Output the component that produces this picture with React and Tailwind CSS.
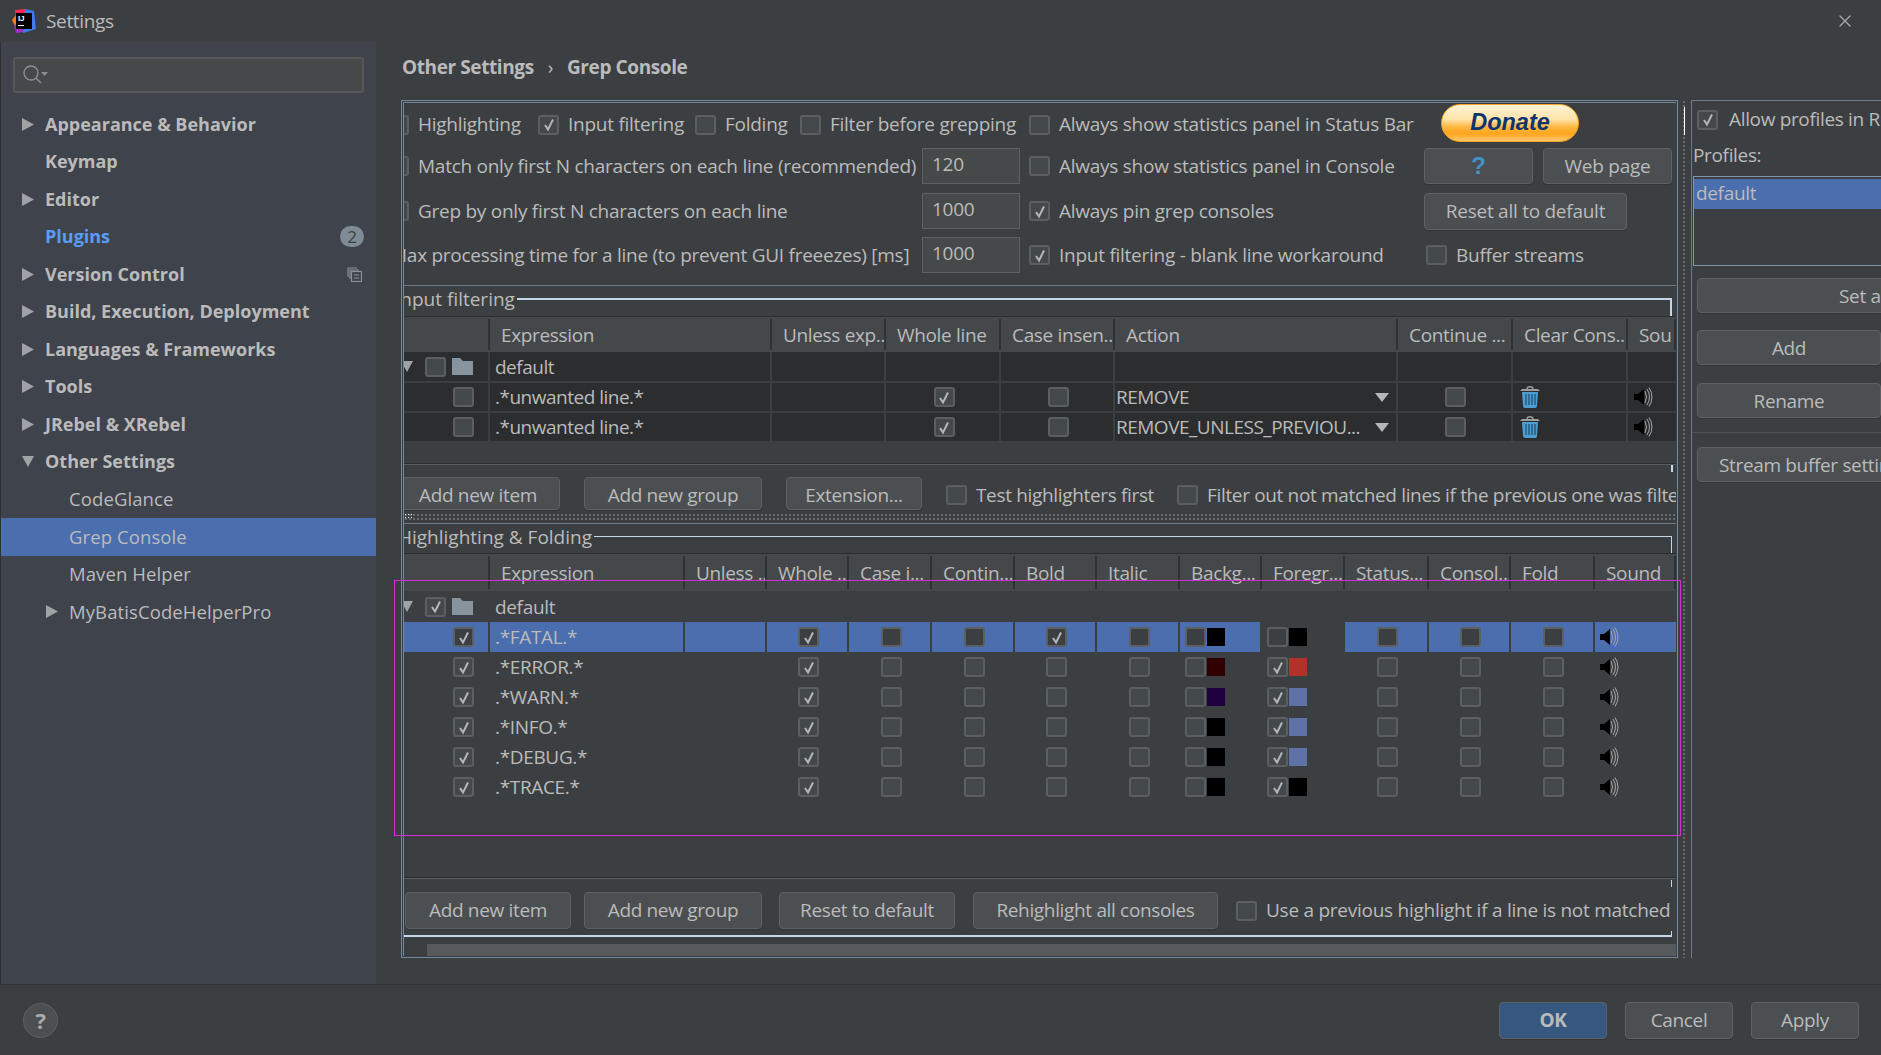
import { X } from 'lucide-react'

const menu = [
  { label: 'Appearance & Behavior', arrow: 'right' },
  { label: 'Keymap' },
  { label: 'Editor', arrow: 'right' },
  { label: 'Plugins', blue: true, badge: true },
  { label: 'Version Control', arrow: 'right', copy: true },
  { label: 'Build, Execution, Deployment', arrow: 'right' },
  { label: 'Languages & Frameworks', arrow: 'right' },
  { label: 'Tools', arrow: 'right' },
  { label: 'JRebel & XRebel', arrow: 'right' },
  { label: 'Other Settings', arrow: 'down' },
  { label: 'CodeGlance', sub: true },
  { label: 'Grep Console', sub: true, selected: true },
  { label: 'Maven Helper', sub: true },
  { label: 'MyBatisCodeHelperPro', sub: true, arrow: 'right' },
]

const filterHead = ['', 'Expression', 'Unless exp...', 'Whole line', 'Case insen...', 'Action', 'Continue ...', 'Clear Cons...', 'Sou']
const filterRows = [
  { action: 'REMOVE' },
  { action: 'REMOVE_UNLESS_PREVIOU...' },
]

const highlightHead = ['', 'Expression', 'Unless ...', 'Whole ...', 'Case i...', 'Contin...', 'Bold', 'Italic', 'Backg...', 'Foregr...', 'Status...', 'Consol...', 'Fold', 'Sound']
const highlightRows = [
  { expr: '.*FATAL.*', bold: true, bg: 'bg-[#000000]', fg: 'bg-[#000000]', selected: true },
  { expr: '.*ERROR.*', fgOn: true, bg: 'bg-[#300000]', fg: 'bg-[#b03228]' },
  { expr: '.*WARN.*', fgOn: true, bg: 'bg-[#1f0040]', fg: 'bg-[#5f72a8]' },
  { expr: '.*INFO.*', fgOn: true, bg: 'bg-[#000000]', fg: 'bg-[#5f72a8]' },
  { expr: '.*DEBUG.*', fgOn: true, bg: 'bg-[#000000]', fg: 'bg-[#5f72a8]' },
  { expr: '.*TRACE.*', fgOn: true, bg: 'bg-[#000000]', fg: 'bg-[#000000]' },
]

const filterCols = 'grid-cols-[86px_282px_114px_115px_114px_283px_115px_115px_48px]'
const highlightCols = 'grid-cols-[86px_195px_82px_82px_83px_83px_82px_83px_82px_83px_84px_82px_84px_81px]'

const Logo = () => (
  <svg width="24" height="24" viewBox="0 0 24 24">
    <polygon points="3,1 13,0 16,6 4,12" fill="#fe2857" />
    <polygon points="0,11 5,5 9,16 3,17" fill="#fe7a16" />
    <polygon points="2,16 9,14 12,23 4,24" fill="#a22fc4" />
    <polygon points="13,0 22,2 24,20 11,24" fill="#3d7cf0" />
    <rect x="4" y="4" width="16" height="16" fill="#000" />
    <text x="6" y="12" fontSize="8" fontWeight="700" fill="#fff" fontFamily="Liberation Sans, sans-serif">IJ</text>
    <rect x="6" y="16" width="6" height="1" fill="#fff" />
  </svg>
)

const Tri = ({ dir = 'right', className = '' }) => (
  <svg width="12" height="13" viewBox="0 0 12 13" className={className}>
    {dir === 'right' ? <polygon points="0,0 12,6.5 0,13" fill="#a0a3a5" /> : <polygon points="0,1 12,1 6,12" fill="#a0a3a5" />}
  </svg>
)

const CheckMark = () => (
  <svg width="14" height="15" viewBox="0 0 14 15" fill="none">
    <path d="M3 8 L6 12.5 L11 2.5" stroke="#b4b6b8" strokeWidth="2" />
  </svg>
)

// darcula checkbox, sits 21x20 in every row
const Box = ({ on, dark, className = '' }) => (
  <span className={`flex h-[20px] w-[21px] shrink-0 items-center justify-center rounded-[3px] border-2 border-[#5c5f61] ${dark ? 'bg-[#3c3f41]' : 'bg-[#43484a]'} ${className}`}>
    {on && <CheckMark />}
  </span>
)

const Check = ({ on, label, className = '' }) => (
  <div className={`flex shrink-0 items-center gap-[9px] whitespace-nowrap ${className}`}>
    <Box on={on} />
    <span>{label}</span>
  </div>
)

const Btn = ({ children, className = '' }) => (
  <div className={`flex shrink-0 items-center justify-center whitespace-nowrap rounded-[4px] border border-[#5e6163] bg-[#4b4f51] shadow-[0_1px_0_#333638] ${className}`}>
    {children}
  </div>
)

const Field = ({ value }) => (
  <div className="flex h-[36px] w-[98px] shrink-0 items-center border border-[#5e6163] bg-[#45494a] pb-[3px] pl-[9px]">{value}</div>
)

const Folder = () => (
  <svg width="21" height="17" viewBox="0 0 21 17" className="shrink-0">
    <path d="M0 0 H8 L11 3 H21 V17 H0 Z" fill="#87939d" />
  </svg>
)

const Trash = () => (
  <svg width="20" height="22" viewBox="0 0 20 22">
    <path d="M7 3 C7 0 13 0 13 3" stroke="#9a9a9a" strokeWidth="1.5" fill="none" />
    <path d="M0 5 L2 3 H18 L20 5 Z" fill="#9a9c9e" />
    <path d="M2 6 H18 L17 20 Q17 22 15 22 H5 Q3 22 3 20 Z" fill="#4c9fd3" />
    <path d="M6 8 V19 M9 8 V19 M12 8 V19 M15 8 V19" stroke="#23577a" strokeWidth="1.4" />
  </svg>
)

const Speaker = () => (
  <svg width="20" height="20" viewBox="0 0 20 20" fill="none">
    <path d="M0 7 H4 L10 2 V18 L4 13 H0 Z" fill="#000" />
    <path d="M11 4 Q14 10 11 16 M13 2 Q18 10 13 18 M15 0.5 Q21 10 15 19.5" stroke="#a4a6a8" strokeWidth="1" />
  </svg>
)

const Donate = () => (
  <div className="flex h-[38px] w-[138px] items-center justify-center rounded-full border border-[#f5a623] bg-[linear-gradient(#fff3d6_0%,#ffe3a8_40%,#ffb53c_62%,#ffa51f_80%,#ffc870_100%)] font-['Liberation_Sans',sans-serif] text-[23.5px] font-bold italic tracking-normal text-[#0b3470]">
    Donate
  </div>
)

const Title = ({ text, indent, thin }) => (
  <div className={`flex items-start overflow-hidden whitespace-nowrap ${thin ? 'h-[29px]' : 'h-[30px]'}`}>
    <span className={`shrink-0 pr-[2px] leading-[26px] tracking-normal ${indent}`}>{text}</span>
    <div className={`mr-[4px] flex-1 border-[#c3d6e8] ${thin ? 'mt-[12px] h-[17px] border-r border-t' : 'mt-[12px] h-[18px] border-r-2 border-t-2'}`} />
  </div>
)

const Head = ({ cols, labels, height }) => (
  <div className={`grid border-t border-[#2b2d2f] bg-[#44484b] ${cols} ${height}`}>
    {labels.map((label, i) => (
      <div key={i} className={`my-[2px] flex items-center overflow-hidden whitespace-nowrap border-r-2 border-[#2f3234] pt-[2px] ${i === 0 ? '' : 'pl-[11px]'}`}>
        {label}
      </div>
    ))}
  </div>
)

const Sidebar = () => (
  <aside className="flex w-[376px] shrink-0 flex-col border-l border-[#2f3133] bg-[#3f434c]">
    <div className="mx-[12px] mt-[15px] flex h-[36px] items-center rounded-[3px] border-2 border-[#555859] bg-[#45494a] pl-[8px]">
      <svg width="26" height="20" viewBox="0 0 26 20" fill="none">
        <circle cx="8" cy="8" r="7" stroke="#8c8e90" strokeWidth="1.4" />
        <path d="M13 13 L18 18" stroke="#8c8e90" strokeWidth="1.6" />
        <polygon points="18,7 25,7 21.5,11" fill="#8c8e90" />
      </svg>
    </div>
    <div className="mt-[12.5px]">
      {menu.map(item => (
        <div key={item.label} className={`flex h-[37.5px] items-center ${item.selected ? 'bg-[#4b6eaf]' : ''} ${item.sub ? 'pl-[45px] font-normal' : 'pl-[21px] font-bold'}`}>
          <span className="flex w-[23px] shrink-0">{item.arrow && <Tri dir={item.arrow} />}</span>
          <span className={`flex-1 whitespace-nowrap ${item.blue ? 'text-[#589df6]' : ''} ${item.sub ? 'text-[18.5px] tracking-[0.1px]' : 'text-[18px] tracking-normal'}`}>{item.label}</span>
          {item.badge && <span className="mr-[12px] flex h-[21px] w-[24px] items-center justify-center rounded-full bg-[#7f8b96] text-[17px] font-normal text-[#3c3f41]">2</span>}
          {item.copy && (
            <svg width="15" height="15" viewBox="0 0 15 15" fill="none" stroke="#8d9195" strokeWidth="1.2" className="mr-[14px]">
              <path d="M1 10 V1 H10" />
              <path d="M3 12 V3 H12 V3" />
              <rect x="4.5" y="4.5" width="10" height="10" />
              <path d="M7 8 H12 M7 11 H12" />
            </svg>
          )}
        </div>
      ))}
    </div>
  </aside>
)

const GeneralOptions = () => (
  <div className="grid h-[182px] grid-cols-[625px_395px_1fr] grid-rows-[43px_40px_50px_38px] overflow-hidden tracking-[-0.26px]">
    <div className="flex items-center">
      <Check label="Highlighting" className="-ml-[16px] w-[150px]" />
      <Check on label="Input filtering" className="w-[157px]" />
      <Check label="Folding" className="w-[105px]" />
      <Check label="Filter before grepping" />
    </div>
    <Check label="Always show statistics panel in Status Bar" />
    <div className="ml-[17px] flex items-start pt-[1px]"><Donate /></div>

    <div className="flex items-center">
      <Check label="Match only first N characters on each line (recommended)" className="-ml-[16px] w-[534px]" />
      <Field value="120" />
    </div>
    <Check label="Always show statistics panel in Console" />
    <div className="flex items-center gap-[10px]">
      <Btn className="h-[36px] w-[109px] font-['Liberation_Sans',sans-serif] text-[24px] font-bold text-[#3f93c6]">?</Btn>
      <Btn className="h-[36px] w-[129px]">Web page</Btn>
    </div>

    <div className="flex items-center">
      <Check label="Grep by only first N characters on each line" className="-ml-[16px] w-[534px]" />
      <Field value="1000" />
    </div>
    <Check on label="Always pin grep consoles" />
    <div className="flex items-center">
      <Btn className="h-[37px] w-[203px]">Reset all to default</Btn>
    </div>

    <div className="flex items-center">
      <span className="-ml-[14px] w-[532px] shrink-0 whitespace-nowrap">Max processing time for a line (to prevent GUI freeezes) [ms]</span>
      <Field value="1000" />
    </div>
    <Check on label="Input filtering - blank line workaround" />
    <Check label="Buffer streams" className="pl-[2px]" />
  </div>
)

const FilterRow = ({ cols, first, folder, action }) => (
  <div className={`grid border-b-2 border-[#3c3f41] bg-[#2b2d2f] ${cols} ${folder ? 'h-[31px]' : 'h-[30px]'}`}>
    {first}
    <div className={`flex items-center overflow-hidden whitespace-nowrap border-r-2 border-[#3c3f41] pl-[5px] tracking-[-0.5px] ${folder ? 'pt-[2px]' : ''}`}>{folder ? 'default' : '.*unwanted line.*'}</div>
    <div className="border-r-2 border-[#3c3f41]" />
    <div className="flex items-center justify-center border-r-2 border-[#3c3f41] pl-[3px]">{!folder && <Box on />}</div>
    <div className="flex items-center justify-center border-r-2 border-[#3c3f41] pl-[2px]">{!folder && <Box />}</div>
    <div className="flex items-center justify-between border-r-2 border-[#3c3f41] pl-[1px] pr-[7px] whitespace-nowrap tracking-[-0.5px]">
      {action}
      {action && <svg width="14" height="9" viewBox="0 0 14 9"><polygon points="0,0 14,0 7,9" fill="#b4b6b8" /></svg>}
    </div>
    <div className="flex items-center justify-center border-r-2 border-[#3c3f41] pl-[2px]">{!folder && <Box />}</div>
    <div className="flex items-center border-r-2 border-[#3c3f41] pl-[7px]">{!folder && <Trash />}</div>
    <div className="flex items-center pl-[6px]">{!folder && <Speaker />}</div>
  </div>
)

const GroupCell = ({ on, bordered }) => (
  <div className={`flex items-center overflow-hidden ${bordered ? 'border-r-2 border-[#3c3f41]' : ''}`}>
    <Tri dir="down" className="-ml-[3px] mr-[12px] shrink-0" />
    <Box on={on} className="mr-[6px]" />
    <Folder />
  </div>
)

const ItemCell = ({ on, blue = '' }) => (
  <div className={`flex items-center justify-end border-r-2 border-[#3c3f41] pr-[14px] ${blue}`}>
    <Box on={on} dark={!!blue} />
  </div>
)

const FilterTable = () => (
  <div>
    <Head cols={filterCols} labels={filterHead} height="h-[36px]" />
    <FilterRow cols={filterCols} folder first={<GroupCell bordered />} />
    {filterRows.map(r => (
      <FilterRow key={r.action} cols={filterCols} action={r.action} first={<ItemCell />} />
    ))}
  </div>
)

const HighlightRow = ({ row }) => {
  const blue = row.selected ? 'bg-[#4b6eaf]' : ''
  const cell = `flex items-center border-r-2 border-[#3c3f41] ${blue}`
  const center = `${cell} justify-center pl-[3px]`
  return (
    <div className={`grid h-[30px] ${highlightCols}`}>
      <ItemCell on blue={blue} />
      <div className={`${cell} overflow-hidden whitespace-nowrap pl-[5px]`}>{row.expr}</div>
      <div className={cell} />
      <div className={center}><Box on dark={row.selected} /></div>
      <div className={center}><Box dark={row.selected} /></div>
      <div className={center}><Box dark={row.selected} /></div>
      <div className={center}><Box on={row.bold} dark={row.selected} /></div>
      <div className={center}><Box dark={row.selected} /></div>
      <div className={`${cell} pl-[5px]`}><Box dark={row.selected} /><span className={`ml-[1px] h-[18px] w-[18px] ${row.bg}`} /></div>
      <div className="flex items-center pl-[5px]"><Box on={row.fgOn} dark={row.selected} /><span className={`ml-[1px] h-[18px] w-[18px] ${row.fg}`} /></div>
      <div className={center}><Box dark={row.selected} /></div>
      <div className={center}><Box dark={row.selected} /></div>
      <div className={center}><Box dark={row.selected} /></div>
      <div className={`flex items-center pl-[5px] ${blue}`}><Speaker /></div>
    </div>
  )
}

const HighlightTable = () => (
  <div>
    <Head cols={highlightCols} labels={highlightHead} height="h-[38px]" />
    <div className={`grid h-[31px] ${highlightCols}`}>
      <GroupCell on />
      <div className="flex items-center pl-[5px] pt-[1px]">default</div>
    </div>
    {highlightRows.map(r => <HighlightRow key={r.expr} row={r} />)}
  </div>
)

const Panel = () => (
  <div className="h-[858px] w-[1277px] shrink-0 border border-[#75879a] p-[1px]">
    <div className="flex h-full flex-col overflow-hidden border border-[#75879a] border-b-0 border-r-0">
      <GeneralOptions />
      <div className="h-px bg-[#6d7b88]" />
      <Title text="Input filtering" indent="-ml-[9px]" />
      <FilterTable />
      <div className="h-[20px] shrink-0" />
      <div className="h-[2px] border-t border-[#2b2d2f] bg-[#5a5e60]" />
      <div className="relative flex h-[48px] shrink-0 items-start gap-[24px] pt-[12px]">
        <span className="absolute right-[3px] top-0 h-[7px] w-[2px] bg-[#c3d6e8]" />
        <Btn className="-ml-[8px] h-[33px] w-[164px] pt-[3px]">Add new item</Btn>
        <Btn className="h-[33px] w-[178px] pt-[3px]">Add new group</Btn>
        <Btn className="h-[33px] w-[136px] pt-[3px]">Extension...</Btn>
        <Check label="Test highlighters first" className="h-[33px] w-[207px] pt-[3px]" />
        <Check label="Filter out not matched lines if the previous one was filtered" className="h-[33px] pt-[3px]" />
      </div>
      <div className="relative h-[7px] shrink-0 bg-[radial-gradient(#6a6d6f_1px,transparent_1px)] bg-[length:4px_4px]">
        <span className="absolute left-0 top-0 h-[5px] w-[10px] bg-[radial-gradient(#ffffff_1px,transparent_1px)] bg-[length:3px_3px]" />
      </div>
      <div className="mt-[3px] h-px shrink-0 bg-[#6d7b88]" />
      <Title text="Highlighting & Folding" indent="-ml-[6px]" thin />
      <HighlightTable />
      <div className="flex-1" />
      <div className="h-[2px] shrink-0 border-t border-[#2b2d2f] bg-[#5a5e60]" />
      <div className="relative mr-[4px] flex h-[58px] shrink-0 items-start border-b-2 border-[#c3d6e8] pt-[13px]">
        <span className="absolute right-0 top-[1px] h-[7px] w-px bg-[#c3d6e8]" />
        <span className="absolute bottom-0 right-0 h-[4px] w-px bg-[#c3d6e8]" />
        <Btn className="ml-[1px] h-[37px] w-[166px]">Add new item</Btn>
        <Btn className="ml-[13px] h-[37px] w-[178px]">Add new group</Btn>
        <Btn className="ml-[17px] h-[37px] w-[176px]">Reset to default</Btn>
        <Btn className="ml-[18px] h-[37px] w-[245px]">Rehighlight all consoles</Btn>
        <Check label="Use a previous highlight if a line is not matched" className="ml-[18px] h-[37px] tracking-[-0.26px]" />
      </div>
      <div className="h-[7px] shrink-0" />
      <div className="ml-[23px] h-[12px] shrink-0 bg-[#565a5b]" />
    </div>
  </div>
)

const Splitter = () => (
  <div className="relative flex h-[858px] w-[13px] shrink-0 justify-center px-[3px]">
    <div className="w-[5px] bg-[radial-gradient(#66696b_1px,transparent_1px)] bg-[length:4px_4px]" />
    <span className="absolute left-[6px] top-[7px] h-[28px] w-[1px] bg-[radial-gradient(#ffffff_1px,transparent_1px)] bg-[length:2px_3px]" />
  </div>
)

const Profiles = () => (
  <div className="flex h-[858px] w-[200px] shrink-0 flex-col overflow-hidden border-l border-t border-[#6d7b88]">
    <Check on label="Allow profiles in Run configuration" className="ml-[5px] mt-[7px] h-[23px] gap-[11px]" />
    <div className="ml-[1px] mt-[12px] h-[24px] leading-[24px]">Profiles:</div>
    <div className="ml-[1px] mt-[9px] h-[90px] w-[200px] border-y border-l border-[#7f97ad] pt-[2px]">
      <div className="h-[30px] bg-[#4b6eaf] pl-[2px] leading-[28px]">default</div>
    </div>
    <Btn className="ml-[5px] mt-[12px] h-[35px] w-[240px] justify-start pl-[141px] pt-[1px]">Set active profile</Btn>
    <Btn className="ml-[5px] mt-[17px] h-[35px] w-[184px] pt-[2px]">Add</Btn>
    <Btn className="ml-[5px] mt-[18px] h-[35px] w-[184px] pt-[2px]">Rename</Btn>
    <div className="mt-[14px] h-px bg-[#505355]" />
    <Btn className="ml-[5px] mt-[14px] h-[35px] w-[240px] justify-start pl-[21px] pt-[2px]">Stream buffer settings</Btn>
  </div>
)

const Footer = () => (
  <footer className="flex h-[71px] shrink-0 items-center border-t border-[#2f3133] pl-[23px] pr-[22px]">
    <span className="flex h-[35px] w-[35px] items-center justify-center rounded-full border border-[#5e6163] bg-[#4b4f51] text-[22px] font-bold text-[#a9abad]">?</span>
    <div className="flex-1" />
    <Btn className="h-[37px] w-[108px] border-[#4c708c] bg-[#365880] font-bold">OK</Btn>
    <Btn className="ml-[18px] h-[37px] w-[108px]">Cancel</Btn>
    <Btn className="ml-[18px] h-[37px] w-[108px]">Apply</Btn>
  </footer>
)

export default function App() {
  return (
    <div className="relative flex h-screen w-screen flex-col overflow-hidden bg-[#3c3f41] font-['Open_Sans',sans-serif] text-[19px] tracking-[-0.34px] text-[#bbbbbb]">
      <header className="flex h-[42px] shrink-0 items-center pl-[12px] pr-[26px]">
        <Logo />
        <span className="ml-[10px] flex-1">Settings</span>
        <X size={20} strokeWidth={1.5} className="text-[#a9abad]" />
      </header>
      <div className="flex h-[942px] shrink-0">
        <Sidebar />
        <main className="flex min-w-0 flex-1 flex-col">
          <div className="flex h-[58px] shrink-0 items-center gap-[14px] pb-[7px] pl-[26px] font-bold tracking-[-0.4px]">
            <span>Other Settings</span>
            <span className="font-normal">›</span>
            <span>Grep Console</span>
          </div>
          <div className="flex pl-[25px]">
            <Panel />
            <Splitter />
            <Profiles />
          </div>
        </main>
      </div>
      <Footer />
      <div className="pointer-events-none absolute left-[394px] top-[580px] h-[256px] w-[1287px] border border-[#d030d0]" />
    </div>
  )
}
